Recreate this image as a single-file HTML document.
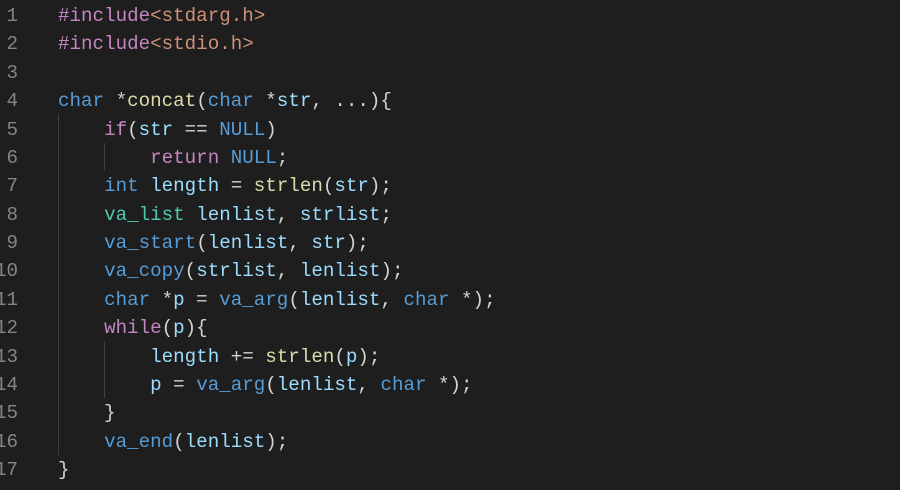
<!DOCTYPE html>
<html><head><style>
body{margin:0;width:900px;height:490px;background:#1e1e1e;overflow:hidden;position:relative;font-family:"Liberation Mono",monospace;font-size:19.2px;}
.l{position:absolute;left:0;height:28.375px;line-height:28.375px;white-space:pre;width:900px}
.n{position:absolute;right:882px;color:#858585;text-align:right}
.c{position:absolute;left:58px;color:#d4d4d4}
.g{position:absolute;width:1px;background:#404040}
.k{color:#569cd6}.p{color:#c586c0}.s{color:#ce9178}.f{color:#dcdcaa}.v{color:#9cdcfe}.t{color:#4ec9b0}
</style></head><body>
<div class="g" style="left:58px;top:114px;height:341px"></div>
<div class="g" style="left:104px;top:143px;height:28px"></div>
<div class="g" style="left:104px;top:341px;height:57px"></div>
<div class="l" style="top:2px"><span class="n">1</span><span class="c"><span class="p">#include</span><span class="s">&lt;stdarg.h&gt;</span></span></div>
<div class="l" style="top:30.4px"><span class="n">2</span><span class="c"><span class="p">#include</span><span class="s">&lt;stdio.h&gt;</span></span></div>
<div class="l" style="top:58.8px"><span class="n">3</span></div>
<div class="l" style="top:87.1px"><span class="n">4</span><span class="c"><span class="k">char</span> *<span class="f">concat</span>(<span class="k">char</span> *<span class="v">str</span>, ...){</span></div>
<div class="l" style="top:115.5px"><span class="n">5</span><span class="c">    <span class="p">if</span>(<span class="v">str</span> == <span class="k">NULL</span>)</span></div>
<div class="l" style="top:143.9px"><span class="n">6</span><span class="c">        <span class="p">return</span> <span class="k">NULL</span>;</span></div>
<div class="l" style="top:172.3px"><span class="n">7</span><span class="c">    <span class="k">int</span> <span class="v">length</span> = <span class="f">strlen</span>(<span class="v">str</span>);</span></div>
<div class="l" style="top:200.6px"><span class="n">8</span><span class="c">    <span class="t">va_list</span> <span class="v">lenlist</span>, <span class="v">strlist</span>;</span></div>
<div class="l" style="top:229px"><span class="n">9</span><span class="c">    <span class="k">va_start</span>(<span class="v">lenlist</span>, <span class="v">str</span>);</span></div>
<div class="l" style="top:257.4px"><span class="n">10</span><span class="c">    <span class="k">va_copy</span>(<span class="v">strlist</span>, <span class="v">lenlist</span>);</span></div>
<div class="l" style="top:285.8px"><span class="n">11</span><span class="c">    <span class="k">char</span> *<span class="v">p</span> = <span class="k">va_arg</span>(<span class="v">lenlist</span>, <span class="k">char</span> *);</span></div>
<div class="l" style="top:314.1px"><span class="n">12</span><span class="c">    <span class="p">while</span>(<span class="v">p</span>){</span></div>
<div class="l" style="top:342.5px"><span class="n">13</span><span class="c">        <span class="v">length</span> += <span class="f">strlen</span>(<span class="v">p</span>);</span></div>
<div class="l" style="top:370.9px"><span class="n">14</span><span class="c">        <span class="v">p</span> = <span class="k">va_arg</span>(<span class="v">lenlist</span>, <span class="k">char</span> *);</span></div>
<div class="l" style="top:399.3px"><span class="n">15</span><span class="c">    }</span></div>
<div class="l" style="top:427.6px"><span class="n">16</span><span class="c">    <span class="k">va_end</span>(<span class="v">lenlist</span>);</span></div>
<div class="l" style="top:456px"><span class="n">17</span><span class="c">}</span></div>
</body></html>
